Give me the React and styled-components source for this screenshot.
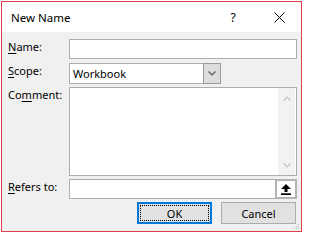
import React from "react";
import styled, { createGlobalStyle } from "styled-components";

const GlobalStyle = createGlobalStyle`
  html, body {
    margin: 0;
    padding: 0;
    background: #ffffff;
  }
  body {
    padding: 1px 0 0 1px;
  }
`;

const Window = styled.div`
  box-sizing: border-box;
  width: 301px;
  height: 231px;
  border: 1px solid #e0404c;
  display: flex;
  flex-direction: column;
  font-family: "Noto Sans", "Open Sans", sans-serif;
  color: #000;
  background: #f0f0f0;
  position: relative;
`;

const TitleBar = styled.div`
  height: 30px;
  background: #ffffff;
  display: flex;
  align-items: center;
  padding-left: 9px;
`;

const Title = styled.div`
  font-size: 11.5px;
  flex: 1;
`;

const HelpMark = styled.div`
  font-size: 12px;
  width: 14px;
  text-align: center;
  margin-right: 34px;
`;

const CloseIcon = styled.svg`
  width: 11px;
  height: 11px;
  margin-right: 16px;
  margin-top: 1px;
`;

const Body = styled.div`
  flex: 1;
  padding: 7px 4px 0 6px;
  display: flex;
  flex-direction: column;
`;

const Row = styled.div`
  display: grid;
  grid-template-columns: 61px 1fr;
  height: ${(p) => p.h}px;
  margin-bottom: ${(p) => p.gap}px;
`;

const Label = styled.label`
  font-size: 11px;
  line-height: 16px;

  u {
    text-decoration: underline;
    text-underline-offset: 2px;
  }
`;

const TextBox = styled.div`
  box-sizing: border-box;
  border: 1px solid #abadb3;
  background: #ffffff;
  display: flex;
  align-items: stretch;
  position: relative;
  width: ${(p) => (p.w ? `${p.w}px` : "auto")};
`;

const SelectText = styled.div`
  flex: 1;
  font-size: 11px;
  line-height: 19px;
  padding-left: 3px;
`;

const DropButton = styled.div`
  box-sizing: border-box;
  width: 18px;
  margin: -1px -1px -1px 0;
  border: 1px solid #9c9c9c;
  background: #dddddd;
  display: flex;
  align-items: center;
  justify-content: center;
`;

const ScrollBar = styled.div`
  width: 17px;
  margin-left: auto;
  margin-right: 1px;
  background: #f2f2f2;
  display: flex;
  flex-direction: column;
  justify-content: space-between;
  align-items: center;
  padding: 8px 0 7px;
`;

const RefButton = styled.div`
  box-sizing: border-box;
  width: 22px;
  margin: -1px -1px -1px auto;
  border: 2px solid #b3b3b3;
  background: #ffffff;
  display: flex;
  align-items: center;
  justify-content: center;
`;

const ButtonRow = styled.div`
  display: flex;
  justify-content: flex-end;
  gap: 9px;
  padding-right: 1px;
`;

const Button = styled.div`
  box-sizing: border-box;
  width: 75px;
  height: 22px;
  background: #e1e1e1;
  border: ${(p) => (p.primary ? "2px solid #0078d7" : "1px solid #adadad")};
  font-size: 11px;
  display: flex;
  align-items: center;
  justify-content: center;
  position: relative;

  &::after {
    content: "";
    display: ${(p) => (p.primary ? "block" : "none")};
    position: absolute;
    inset: 1px;
    border: 1px dotted #000;
  }
`;

const Grip = styled.svg`
  position: absolute;
  right: 1px;
  bottom: 1px;
  width: 7px;
  height: 7px;
`;

const Chevron = ({ up, color = "#c4c4c4" }) => (
  <svg width="8" height="5" viewBox="0 0 8 5">
    <path
      d={up ? "M0.5 4.5 L4 1 L7.5 4.5" : "M0.5 0.5 L4 4 L7.5 0.5"}
      fill="none"
      stroke={color}
      strokeWidth="1.1"
    />
  </svg>
);

export default function App() {
  return (
    <>
      <GlobalStyle />
      <Window>
        <TitleBar>
          <Title>New Name</Title>
          <HelpMark>?</HelpMark>
          <CloseIcon viewBox="0 0 11 11">
            <path d="M0.5 0.5 L10.5 10.5 M10.5 0.5 L0.5 10.5" stroke="#000" strokeWidth="1" />
          </CloseIcon>
        </TitleBar>
        <Body>
          <Row h={20} gap={4}>
            <Label>
              <u>N</u>ame:
            </Label>
            <TextBox />
          </Row>
          <Row h={21} gap={3}>
            <Label>
              <u>S</u>cope:
            </Label>
            <TextBox w={152}>
              <SelectText>Workbook</SelectText>
              <DropButton>
                <Chevron color="#555" />
              </DropButton>
            </TextBox>
          </Row>
          <Row h={89} gap={3}>
            <Label>
              Co<u>m</u>ment:
            </Label>
            <TextBox>
              <ScrollBar>
                <Chevron up />
                <Chevron />
              </ScrollBar>
            </TextBox>
          </Row>
          <Row h={20} gap={3}>
            <Label>
              <u>R</u>efers to:
            </Label>
            <TextBox>
              <RefButton>
                <svg width="10" height="11" viewBox="0 0 10 11">
                  <path d="M5 0 L10 5 H6.5 V8 H3.5 V5 H0 Z" fill="#000" />
                  <rect x="0" y="9.3" width="10" height="1.7" fill="#000" />
                </svg>
              </RefButton>
            </TextBox>
          </Row>
          <ButtonRow>
            <Button primary>OK</Button>
            <Button>Cancel</Button>
          </ButtonRow>
        </Body>
        <Grip viewBox="0 0 7 7">
          <rect x="5" y="1" width="1" height="1" fill="#b8b8b8" />
          <rect x="3" y="3" width="1" height="1" fill="#b8b8b8" />
          <rect x="5" y="3" width="1" height="1" fill="#b8b8b8" />
          <rect x="1" y="5" width="1" height="1" fill="#b8b8b8" />
          <rect x="3" y="5" width="1" height="1" fill="#b8b8b8" />
          <rect x="5" y="5" width="1" height="1" fill="#b8b8b8" />
        </Grip>
      </Window>
    </>
  );
}
